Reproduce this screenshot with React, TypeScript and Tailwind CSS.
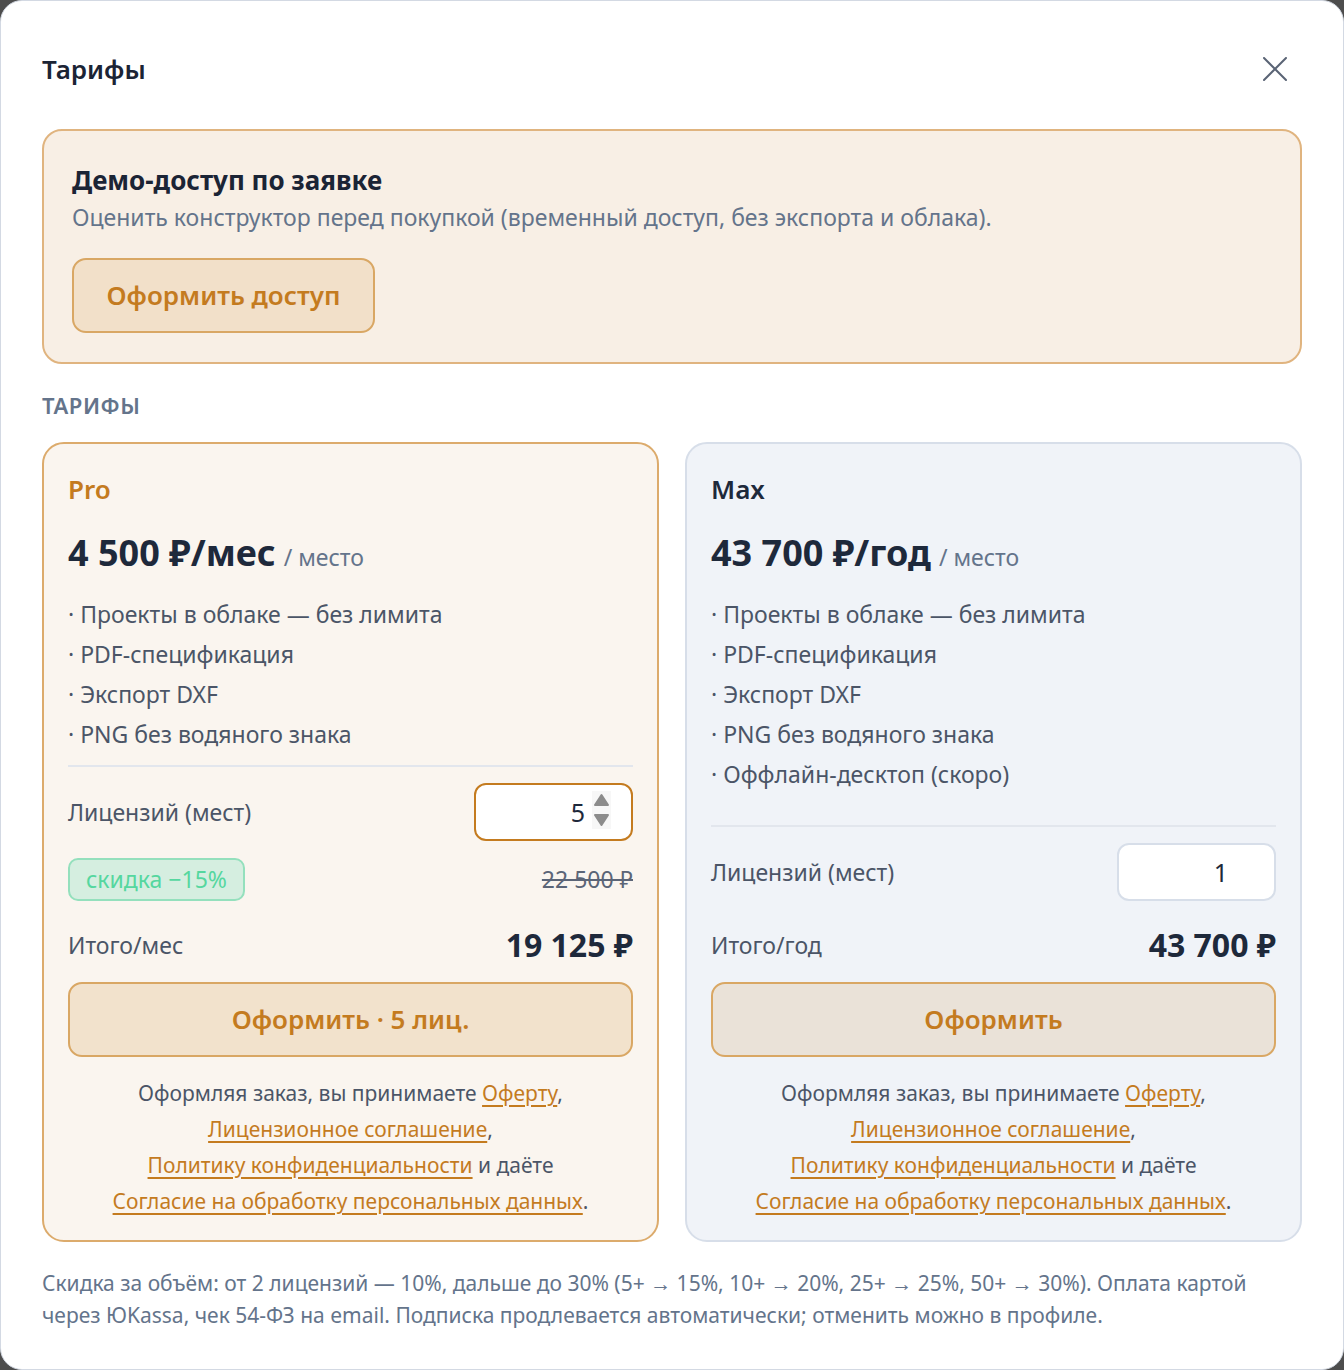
import type { ReactNode } from "react";

type Plan = {
  name: string;
  price: string;
  features: string[];
  seats: number;
  totalLabel: string;
  total: string;
  cta: string;
  highlighted?: boolean;
  discount?: string;
  oldPrice?: string;
};

const plans: Plan[] = [
  {
    name: "Pro",
    price: "4 500 ₽/мес",
    features: [
      "Проекты в облаке — без лимита",
      "PDF-спецификация",
      "Экспорт DXF",
      "PNG без водяного знака",
    ],
    seats: 5,
    totalLabel: "Итого/мес",
    total: "19 125 ₽",
    cta: "Оформить · 5 лиц.",
    highlighted: true,
    discount: "скидка −15%",
    oldPrice: "22 500 ₽",
  },
  {
    name: "Max",
    price: "43 700 ₽/год",
    features: [
      "Проекты в облаке — без лимита",
      "PDF-спецификация",
      "Экспорт DXF",
      "PNG без водяного знака",
      "Оффлайн-десктоп (скоро)",
    ],
    seats: 1,
    totalLabel: "Итого/год",
    total: "43 700 ₽",
    cta: "Оформить",
  },
];

const DocLink = ({ children }: { children: ReactNode }) => (
  <a
    href="#"
    className="text-[#c47b1f] underline decoration-[1.5px] underline-offset-[4px]"
  >
    {children}
  </a>
);

// number stepper arrows shown on the focused seats input
const Spinner = () => (
  <svg
    width="19"
    height="38"
    viewBox="0 0 19 38"
    className="absolute right-[22px] top-[8px]"
  >
    <rect width="19" height="38" fill="#f7f7f7" />
    <path d="M9.5 4 L16 14 H3 Z" fill="#8c8c8c" stroke="#8c8c8c" strokeWidth="2" strokeLinejoin="round" />
    <path d="M9.5 34 L16 24 H3 Z" fill="#8c8c8c" stroke="#8c8c8c" strokeWidth="2" strokeLinejoin="round" />
  </svg>
);

const PlanCard = ({ plan }: { plan: Plan }) => (
  <div
    className={
      plan.highlighted
        ? "flex flex-col rounded-[22px] border-2 border-[#dcab6c] bg-[#faf5ef] px-6 pb-[21px] pt-[29px]"
        : "flex flex-col rounded-[22px] border-2 border-[#d7dee9] bg-[#f0f3f8] px-6 pb-[21px] pt-[29px]"
    }
  >
    <div
      className={
        plan.highlighted
          ? "text-[26px] font-semibold leading-[32px] text-[#c47b1f]"
          : "text-[26px] font-semibold leading-[32px] text-[#1e293b]"
      }
    >
      {plan.name}
    </div>

    <div className="mt-[26px] flex items-baseline gap-2 leading-[44px]">
      <span className="text-[36px] font-bold text-[#1e293b]">{plan.price}</span>
      <span className="text-[23px] text-[#64748b]">/ место</span>
    </div>

    <ul className="mt-[15px] text-[23px] leading-[40px] text-[#4b5567]">
      {plan.features.map((f) => (
        <li key={f}>· {f}</li>
      ))}
    </ul>

    <div className="mt-auto pt-[11px]">
      <div className="h-[2px] bg-[#e2e6ed]" />

      <div className="mt-4 flex items-center justify-between">
        <span className="text-[23px] text-[#4b5567]">Лицензий (мест)</span>
        <div className="relative">
          <input
            readOnly
            value={plan.seats}
            className={
              plan.highlighted
                ? "h-[58px] w-[159px] rounded-[12px] border-2 border-[#c47b1f] bg-white pr-[46px] text-right text-[25px] text-[#1e293b] outline-none"
                : "h-[58px] w-[159px] rounded-[12px] border-2 border-[#d7dee9] bg-white pr-[46px] text-right text-[25px] text-[#1e293b] outline-none"
            }
          />
          {plan.highlighted && <Spinner />}
        </div>
      </div>

      {plan.discount && (
        <div className="mt-[17px] flex items-center justify-between">
          <span className="flex h-[43px] items-center rounded-[10px] border-2 border-[#94e0bd] bg-[#d5eee0] px-4 text-[23px] text-[#55d79f]">
            {plan.discount}
          </span>
          <span className="text-[23px] text-[#5b6577] line-through">{plan.oldPrice}</span>
        </div>
      )}

      <div className="mt-[22px] flex h-[44px] items-center justify-between">
        <span className="text-[23px] text-[#4b5567]">{plan.totalLabel}</span>
        <span className="text-[32px] font-bold text-[#1e293b]">{plan.total}</span>
      </div>

      <button
        className={
          plan.highlighted
            ? "mt-[15px] h-[75px] w-full rounded-[14px] border-2 border-[#d9a764] bg-[#f2e2cc] text-[26px] font-semibold text-[#c47b1f]"
            : "mt-[15px] h-[75px] w-full rounded-[14px] border-2 border-[#d9a764] bg-[#eae2d8] text-[26px] font-semibold text-[#c47b1f]"
        }
      >
        {plan.cta}
      </button>

      <p className="mt-[18px] text-center text-[21px] leading-[36px] text-[#4b5567]">
        Оформляя заказ, вы принимаете <DocLink>Оферту</DocLink>,
        <br />
        <DocLink>Лицензионное соглашение</DocLink>,
        <br />
        <DocLink>Политику конфиденциальности</DocLink> и даёте
        <br />
        <DocLink>Согласие на обработку персональных данных</DocLink>.
      </p>
    </div>
  </div>
);

export default function App() {
  return (
    <div className="min-h-screen bg-[#4d4d4d] font-['Noto_Sans',sans-serif]">
      <div className="h-[1370px] w-[1344px] rounded-[22px] border border-[#d3d9e3] bg-white px-[41px]">
        {/* header */}
        <div className="mt-[48px] flex h-10 items-center justify-between">
          <h2 className="text-[26px] font-semibold text-[#1b2435]">Тарифы</h2>
          <button className="mr-[15px]" aria-label="Закрыть">
            <svg width="24" height="24" viewBox="0 0 24 24">
              <path d="M1 1 L23 23 M23 1 L1 23" stroke="#5a6475" strokeWidth="2" strokeLinecap="round" />
            </svg>
          </button>
        </div>

        {/* demo access */}
        <div className="mt-[40px] rounded-[20px] border-2 border-[#e0b47f] bg-[#f8efe5] px-[28px] pb-[29px] pt-[33px]">
          <div className="text-[26px] font-bold leading-[32px] text-[#1b2435]">Демо-доступ по заявке</div>
          <div className="mt-[6px] text-[23px] leading-[30px] text-[#64748b]">
            Оценить конструктор перед покупкой (временный доступ, без экспорта и облака).
          </div>
          <button className="mt-[26px] h-[75px] w-[303px] rounded-[14px] border-2 border-[#d9a764] bg-[#f2e0c9] text-[26px] font-semibold text-[#c47b1f]">
            Оформить доступ
          </button>
        </div>

        <div className="mt-[27px] text-[22px] font-semibold uppercase leading-[28px] tracking-wide text-[#64748b]">
          Тарифы
        </div>

        <div className="mt-[23px] grid grid-cols-2 gap-[26px]">
          {plans.map((p) => (
            <PlanCard key={p.name} plan={p} />
          ))}
        </div>

        <div className="mt-[25px] text-[21px] leading-[32px] text-[#64748b]">
          <div className="whitespace-nowrap">
            Скидка за объём: от 2 лицензий — 10%, дальше до 30% (5+ → 15%, 10+ → 20%, 25+ → 25%, 50+ → 30%). Оплата картой
          </div>
          <div>через ЮKassa, чек 54-ФЗ на email. Подписка продлевается автоматически; отменить можно в профиле.</div>
        </div>
      </div>
    </div>
  );
}
